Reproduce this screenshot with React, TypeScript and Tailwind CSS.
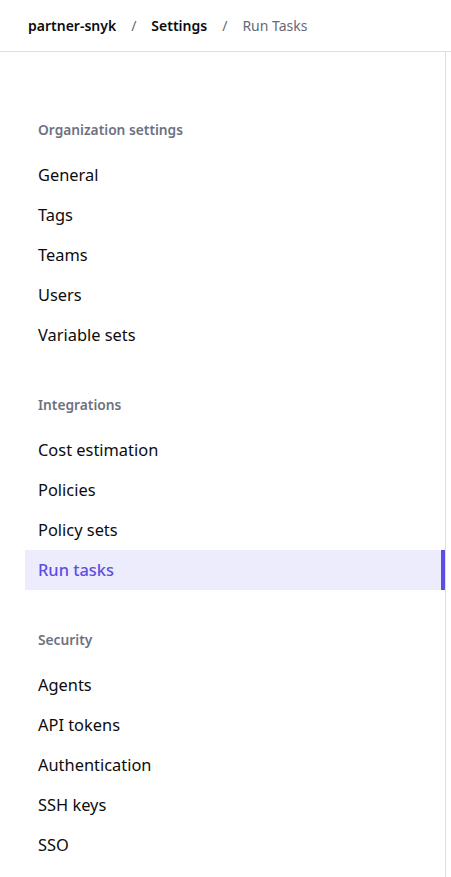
import { Fragment } from 'react'

type NavSection = {
  title: string
  items: string[]
}

const sections: NavSection[] = [
  { title: 'Organization settings', items: ['General', 'Tags', 'Teams', 'Users', 'Variable sets'] },
  { title: 'Integrations', items: ['Cost estimation', 'Policies', 'Policy sets', 'Run tasks'] },
  { title: 'Security', items: ['Agents', 'API tokens', 'Authentication', 'SSH keys', 'SSO'] },
]

const active = 'Run tasks'

export default function App() {
  return (
    <div className="min-h-screen bg-white font-['Noto_Sans',sans-serif] text-[#0c0c0e]">
      {/* Breadcrumb header */}
      <header className="h-[52px] border-b border-[#dedee3] flex items-center px-7 text-[14px] font-semibold">
        <span>partner-snyk</span>
        <span className="mx-[15px] font-normal text-[#656a76]">/</span>
        <span>Settings</span>
        <span className="mx-[15px] font-normal text-[#656a76]">/</span>
        <span className="font-normal text-[#656a76]">Run Tasks</span>
      </header>

      {/* Settings nav */}
      <nav className="w-[446px] border-r border-[#dedee3] pt-[68px] pl-[25px] pb-6">
        {sections.map((section, i) => (
          <Fragment key={section.title}>
            <h3 className={`h-5 pl-[13px] text-[13.75px] leading-5 font-semibold text-[#6e7180] mb-[15px] ${i > 0 ? 'mt-10' : ''}`}>
              {section.title}
            </h3>
            <ul>
              {section.items.map(item => (
                <li key={item}>
                  <a
                    className={`flex items-center h-10 pl-[13px] text-[16.4px] ${
                      item === active
                        ? 'bg-[#edecfc] text-[#5b4ee4] font-medium border-r-4 border-[#5b4ee4]'
                        : 'text-[#0c0c0e]'
                    }`}
                  >
                    {item}
                  </a>
                </li>
              ))}
            </ul>
          </Fragment>
        ))}
      </nav>
    </div>
  )
}
